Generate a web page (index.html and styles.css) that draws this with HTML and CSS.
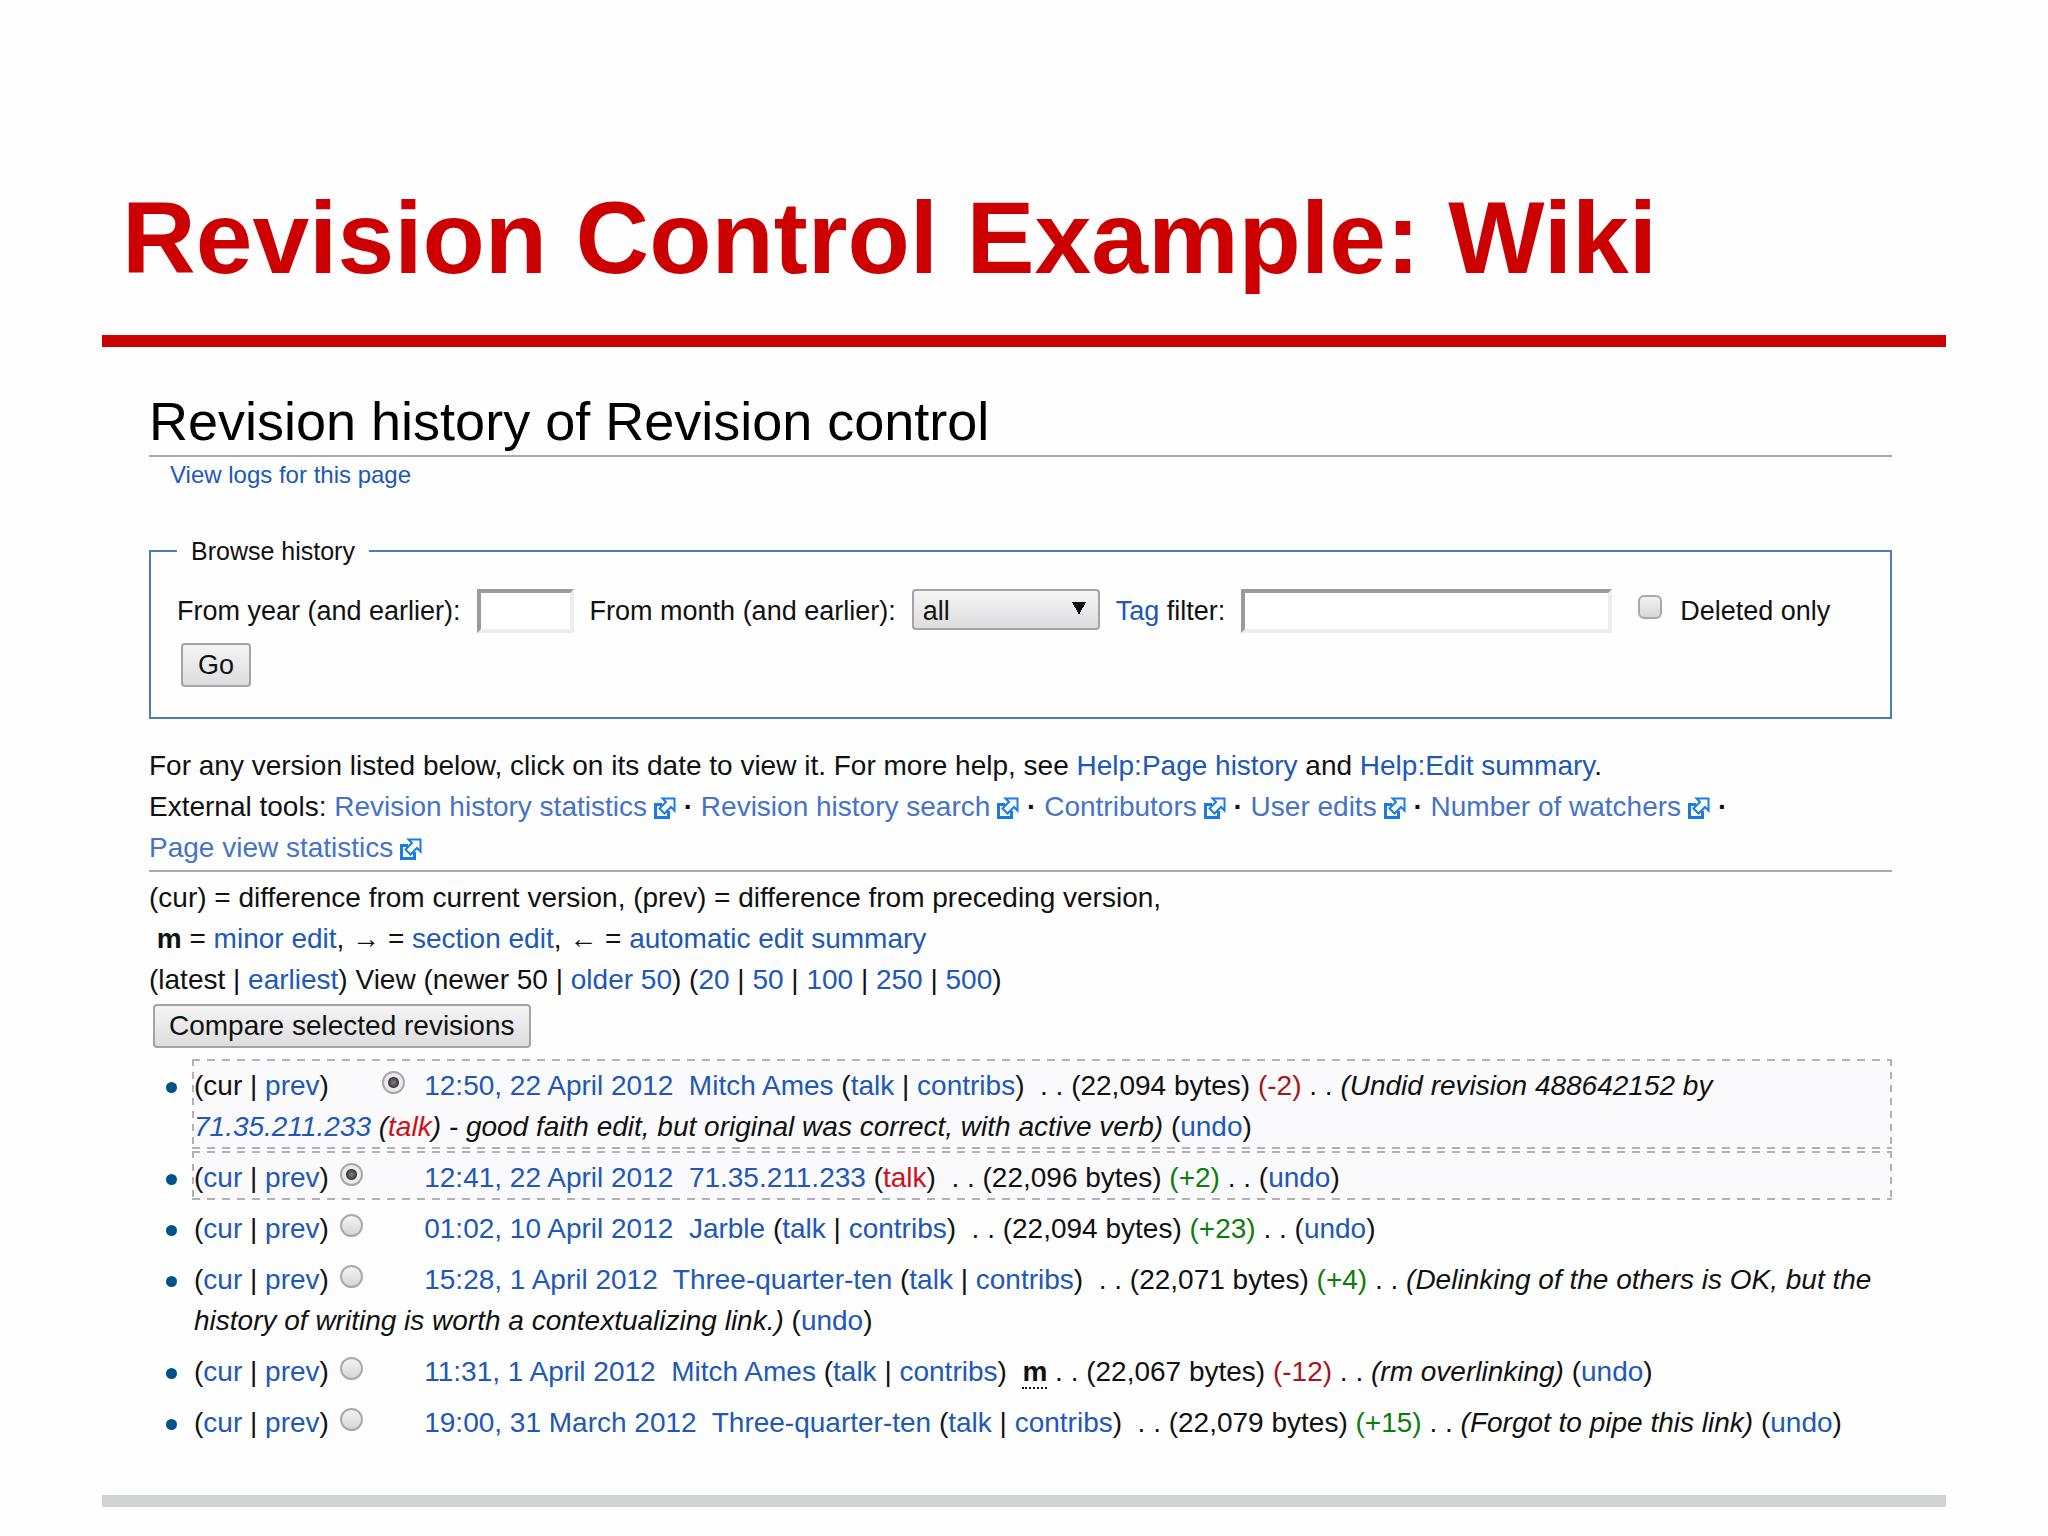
FILE: index.html
```html
<!DOCTYPE html>
<html lang="en">

<head>
    <meta charset="UTF-8">
    <meta name="viewport" content="width=device-width, initial-scale=1.0">
    <title>Revision Control Example: Wiki</title>
    <link rel="stylesheet" href="styles.css">
</head>

<body>
    <!-- external link icon, reused below -->
    <svg class="defs" aria-hidden="true">
        <symbol id="ext" viewBox="0 0 22 22">
            <path d="M8 7.5H1.5v13h13V14" fill="#fff" stroke="#1a7ae6" stroke-width="3" />
            <path d="M8.500 1.500h12v12l-3.500-3.500-6.500 6.500-5-5 6.500-6.500z" fill="#fff" stroke="#1a7ae6" stroke-width="2" />
        </symbol>
    </svg>

    <header class="slide-title">
        <h1>Revision Control Example: Wiki</h1>
    </header>

    <main class="wiki">
        <h2>Revision history of Revision control</h2>
        <p class="logs"><a href="#">View logs for this page</a></p>

        <form>
            <fieldset>
                <legend>Browse history</legend>
                <div class="row">
                    <label for="year">From year (and earlier):</label>
                    <input type="text" id="year" class="year">
                    <label for="month">From month (and earlier):</label>
                    <select id="month">
                        <option>all</option>
                    </select>
                    <label for="tag"><a href="#">Tag</a> filter:</label>
                    <input type="text" id="tag" class="tag">
                    <input type="checkbox" id="deleted">
                    <label for="deleted">Deleted only</label>
                </div>
                <button type="button" class="go">Go</button>
            </fieldset>
        </form>

        <p class="help">For any version listed below, click on its date to view it. For more help, see <a href="#">Help:Page history</a> and <a href="#">Help:Edit summary</a>.<br>
            External tools: <a href="#" class="ext">Revision history statistics<svg><use href="#ext" /></svg></a> <b>·</b>
            <a href="#" class="ext">Revision history search<svg><use href="#ext" /></svg></a> <b>·</b>
            <a href="#" class="ext">Contributors<svg><use href="#ext" /></svg></a> <b>·</b>
            <a href="#" class="ext">User edits<svg><use href="#ext" /></svg></a> <b>·</b>
            <a href="#" class="ext">Number of watchers<svg><use href="#ext" /></svg></a> <b>·</b><br>
            <a href="#" class="ext">Page view statistics<svg><use href="#ext" /></svg></a></p>

        <p class="legend">(cur) = difference from current version, (prev) = difference from preceding version,<br>
            &nbsp;<b>m</b> = <a href="#">minor edit</a>, → = <a href="#">section edit</a>, ← = <a href="#">automatic edit summary</a><br>
            (latest | <a href="#">earliest</a>) View (newer 50 | <a href="#">older 50</a>) (<a href="#">20</a> | <a href="#">50</a> | <a href="#">100</a> | <a href="#">250</a> | <a href="#">500</a>)</p>

        <button type="button" class="compare">Compare selected revisions</button>

        <ul class="history">
            <li>
                <div class="entry selected">
                    (cur | <a href="#">prev</a>)
                    <input type="radio" name="old" class="off" aria-label="Old revision, 12:50, 22 April 2012">
                    <input type="radio" name="new" checked aria-label="New revision, 12:50, 22 April 2012">
                    <a href="#" class="date">12:50, 22 April 2012</a>&nbsp; <a href="#">Mitch Ames</a> (<a href="#">talk</a> | <a href="#">contribs</a>)&nbsp; . . (22,094 bytes) <span class="minus">(-2)</span> . . <i>(Undid revision 488642152 by <a href="#">71.35.211.233</a> (<a href="#" class="new">talk</a>) - good faith edit, but original was correct, with active verb)</i> (<a href="#">undo</a>)
                </div>
            </li>
            <li>
                <div class="entry selected">
                    (<a href="#">cur</a> | <a href="#">prev</a>)
                    <input type="radio" name="old" checked aria-label="Old revision, 12:41, 22 April 2012">
                    <input type="radio" name="new" class="off" aria-label="New revision, 12:41, 22 April 2012">
                    <a href="#" class="date">12:41, 22 April 2012</a>&nbsp; <a href="#">71.35.211.233</a> (<a href="#" class="new">talk</a>)&nbsp; . . (22,096 bytes) <span class="plus">(+2)</span> . . (<a href="#">undo</a>)
                </div>
            </li>
            <li>
                <div class="entry">
                    (<a href="#">cur</a> | <a href="#">prev</a>)
                    <input type="radio" name="old" aria-label="Old revision, 01:02, 10 April 2012">
                    <input type="radio" name="new" class="off" aria-label="New revision, 01:02, 10 April 2012">
                    <a href="#" class="date">01:02, 10 April 2012</a>&nbsp; <a href="#">Jarble</a> (<a href="#">talk</a> | <a href="#">contribs</a>)&nbsp; . . (22,094 bytes) <span class="plus">(+23)</span> . . (<a href="#">undo</a>)
                </div>
            </li>
            <li>
                <div class="entry">
                    (<a href="#">cur</a> | <a href="#">prev</a>)
                    <input type="radio" name="old" aria-label="Old revision, 15:28, 1 April 2012">
                    <input type="radio" name="new" class="off" aria-label="New revision, 15:28, 1 April 2012">
                    <a href="#" class="date">15:28, 1 April 2012</a>&nbsp; <a href="#">Three-quarter-ten</a> (<a href="#">talk</a> | <a href="#">contribs</a>)&nbsp; . . (22,071 bytes) <span class="plus">(+4)</span> . . <i>(Delinking of the others is OK, but the history of writing is worth a contextualizing link.)</i> (<a href="#">undo</a>)
                </div>
            </li>
            <li>
                <div class="entry">
                    (<a href="#">cur</a> | <a href="#">prev</a>)
                    <input type="radio" name="old" aria-label="Old revision, 11:31, 1 April 2012">
                    <input type="radio" name="new" class="off" aria-label="New revision, 11:31, 1 April 2012">
                    <a href="#" class="date">11:31, 1 April 2012</a>&nbsp; <a href="#">Mitch Ames</a> (<a href="#">talk</a> | <a href="#">contribs</a>)&nbsp; <abbr>m</abbr> . . (22,067 bytes) <span class="minus">(-12)</span> . . <i>(rm overlinking)</i> (<a href="#">undo</a>)
                </div>
            </li>
            <li>
                <div class="entry">
                    (<a href="#">cur</a> | <a href="#">prev</a>)
                    <input type="radio" name="old" aria-label="Old revision, 19:00, 31 March 2012">
                    <input type="radio" name="new" class="off" aria-label="New revision, 19:00, 31 March 2012">
                    <a href="#" class="date">19:00, 31 March 2012</a>&nbsp; <a href="#">Three-quarter-ten</a> (<a href="#">talk</a> | <a href="#">contribs</a>)&nbsp; . . (22,079 bytes) <span class="plus">(+15)</span> . . <i>(Forgot to pipe this link)</i> (<a href="#">undo</a>)
                </div>
            </li>
        </ul>
    </main>

    <footer></footer>
</body>

</html>
```
FILE: styles.css
```css
* {
    box-sizing: border-box;
    padding: 0;
    margin: 0;
}

body {
    padding: 0 102px;
    background: #fefefe;
    color: #111;
    font-family: "Liberation Sans", Arial, sans-serif;
    font-size: 28px;
    line-height: 41px;
}

a {
    color: #2058b8;
    text-decoration: none;
}

.defs {
    display: block;
    width: 0;
    height: 0;
}

/* slide title and bars */
.slide-title {
    padding: 176px 20px 35px;
    border-bottom: 12px solid #c00;
}

.slide-title h1 {
    color: #c00;
    font-size: 102px;
    line-height: 124px;
}

footer {
    height: 12px;
    margin-top: 50px;
    background: #d0d2d3;
}

/* wiki page */
.wiki {
    margin: 0 54px 0 47px;
}

.wiki h2 {
    padding-top: 40px;
    border-bottom: 2px solid #aaa;
    color: #000;
    font-size: 54px;
    font-weight: normal;
    line-height: 68px;
}

.logs {
    padding-left: 21px;
    font-size: 24px;
    line-height: 36px;
}

fieldset {
    margin-top: 42px;
    padding: 22px 26px 30px;
    border: 2px solid #4a7db1;
    font-size: 27px;
}

legend {
    padding: 0 14px;
    font-size: 25px;
    line-height: 32px;
}

.row {
    display: flex;
    align-items: center;
    gap: 16px;
    height: 44px;
}

input[type="text"] {
    height: 44px;
    border: 4px solid #eeecef;
    border-top-color: #9d9a9f;
    border-left-color: #9d9a9f;
    background: #fff;
    font: inherit;
}

.year {
    width: 97px;
}

.tag {
    width: 371px;
}

select,
button {
    border: 2px solid #a5a3a6;
    border-radius: 4px;
    background: linear-gradient(#f6f5f6, #dddcde);
    color: #111;
    font: inherit;
}

/* the two small gradients are the halves of the arrow */
select {
    width: 188px;
    height: 41px;
    margin-bottom: 4px;
    padding-left: 9px;
    appearance: none;
    background:
        linear-gradient(to bottom left, #111 50%, transparent 50%) right 19px top 11px / 7px 13px no-repeat,
        linear-gradient(to bottom right, #111 50%, transparent 50%) right 12px top 11px / 7px 13px no-repeat,
        linear-gradient(#f6f5f6, #dddcde);
}

button {
    display: block;
    height: 44px;
    margin-left: 4px;
    padding: 0 14px;
    line-height: 40px;
}

.go {
    margin-top: 10px;
    padding: 0 15px;
}

input[type="checkbox"],
input[type="radio"] {
    appearance: none;
    border: 2px solid #aaa8ab;
    background: linear-gradient(#f4f3f4, #d6d5d7);
}

input[type="checkbox"] {
    width: 24px;
    height: 24px;
    margin: 0 2px 8px 10px;
    border-radius: 6px;
}

.help {
    margin-top: 26px;
    padding-bottom: 2px;
    border-bottom: 2px solid #aaa;
}

.ext {
    color: #4673c8;
}

.ext svg {
    width: 22px;
    height: 22px;
    margin-left: 7px;
    vertical-align: -3px;
}

.legend {
    margin-top: 5px;
}

.compare {
    margin-top: 4px;
}

/* revision list */
.history {
    margin-top: 11px;
    list-style: none;
}

.history li {
    display: flex;
    align-items: flex-start;
    margin-bottom: 2px;
}

.history li::before {
    content: "";
    width: 11px;
    height: 11px;
    margin: 23px 15px 0 17px;
    border-radius: 50%;
    background: #00528c;
}

.entry {
    flex: 1;
    padding: 6px 8px 2px 2px;
}

/* long dashes on all four sides */
.selected {
    background:
        repeating-linear-gradient(90deg, #b4b1b5 0 8px, transparent 8px 15px) top / 100% 2px no-repeat,
        repeating-linear-gradient(90deg, #b4b1b5 0 8px, transparent 8px 15px) bottom / 100% 2px no-repeat,
        repeating-linear-gradient(#b4b1b5 0 7px, transparent 7px 13px) left / 2px 100% no-repeat,
        repeating-linear-gradient(#b4b1b5 0 7px, transparent 7px 13px) right / 2px 100% no-repeat,
        #faf9fb;
}

input[type="radio"] {
    width: 23px;
    height: 23px;
    margin: 0 9px 0 3px;
    border-radius: 50%;
    vertical-align: 1px;
}

input[type="radio"]:checked {
    background: radial-gradient(circle, #777 1px, #3c3c3c 5px, #eceaed 6px);
}

input[type="radio"].off {
    visibility: hidden;
}

.date {
    margin-left: 2px;
}

.plus {
    color: #0c7d0c;
}

.minus {
    color: #a5161a;
}

.new {
    color: #d01018;
}

abbr {
    border-bottom: 2px dotted #111;
    font-weight: bold;
}
```
